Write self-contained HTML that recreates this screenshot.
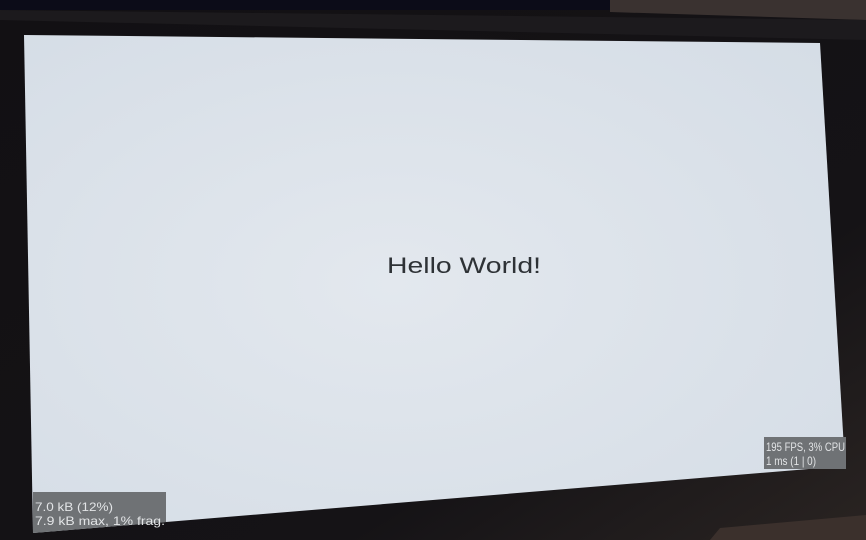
<!DOCTYPE html>
<html><head><meta charset="utf-8"><style>
html,body{margin:0;padding:0;width:866px;height:540px;overflow:hidden;background:#141214}
svg{display:block}
</style></head><body>
<svg width="866" height="540" viewBox="0 0 866 540" xmlns="http://www.w3.org/2000/svg">
<defs>
<linearGradient id="bg" x1="0" y1="0" x2="1" y2="1">
<stop offset="0" stop-color="#121013"/><stop offset="0.7" stop-color="#151316"/><stop offset="1" stop-color="#2a2422"/>
</linearGradient>
<radialGradient id="scr" cx="0.45" cy="0.5" r="0.7">
<stop offset="0" stop-color="#e3e8ee"/><stop offset="1" stop-color="#d5dde6"/>
</radialGradient>
</defs>
<rect width="866" height="540" fill="url(#bg)"/>
<rect x="0" y="0" width="610" height="10" fill="#0c0c18"/>
<polygon points="610,0 866,0 866,20 610,12" fill="#3a3230"/>
<polygon points="720,528 866,515 866,540 710,540" fill="#3b302c"/>
<polygon points="0,10 866,20 866,40 0,20" fill="#1c1a1d"/>
<polygon points="24,35 820,43 845,466 33,533" fill="url(#scr)"/>
<text x="387" y="273" font-family="Liberation Sans, sans-serif" font-size="22" fill="#2e3236" textLength="154" lengthAdjust="spacingAndGlyphs">Hello World!</text>
<rect x="764" y="437" width="82" height="32" fill="#6f7275"/>
<text x="766" y="451" font-family="Liberation Sans, sans-serif" font-size="12" fill="#e2e4e6" textLength="79" lengthAdjust="spacingAndGlyphs">195 FPS, 3% CPU</text>
<text x="766" y="465" font-family="Liberation Sans, sans-serif" font-size="12" fill="#e2e4e6" textLength="50" lengthAdjust="spacingAndGlyphs">1 ms (1 | 0)</text>
<polygon points="33,492 166,492 166,522 33,533" fill="#6f7275"/>
<text x="35" y="511" font-family="Liberation Sans, sans-serif" font-size="12" fill="#e2e4e6" textLength="78" lengthAdjust="spacingAndGlyphs">7.0 kB (12%)</text>
<text x="35" y="525" font-family="Liberation Sans, sans-serif" font-size="12" fill="#e2e4e6" textLength="130" lengthAdjust="spacingAndGlyphs">7.9 kB max, 1% frag.</text>
</svg>
</body></html>
